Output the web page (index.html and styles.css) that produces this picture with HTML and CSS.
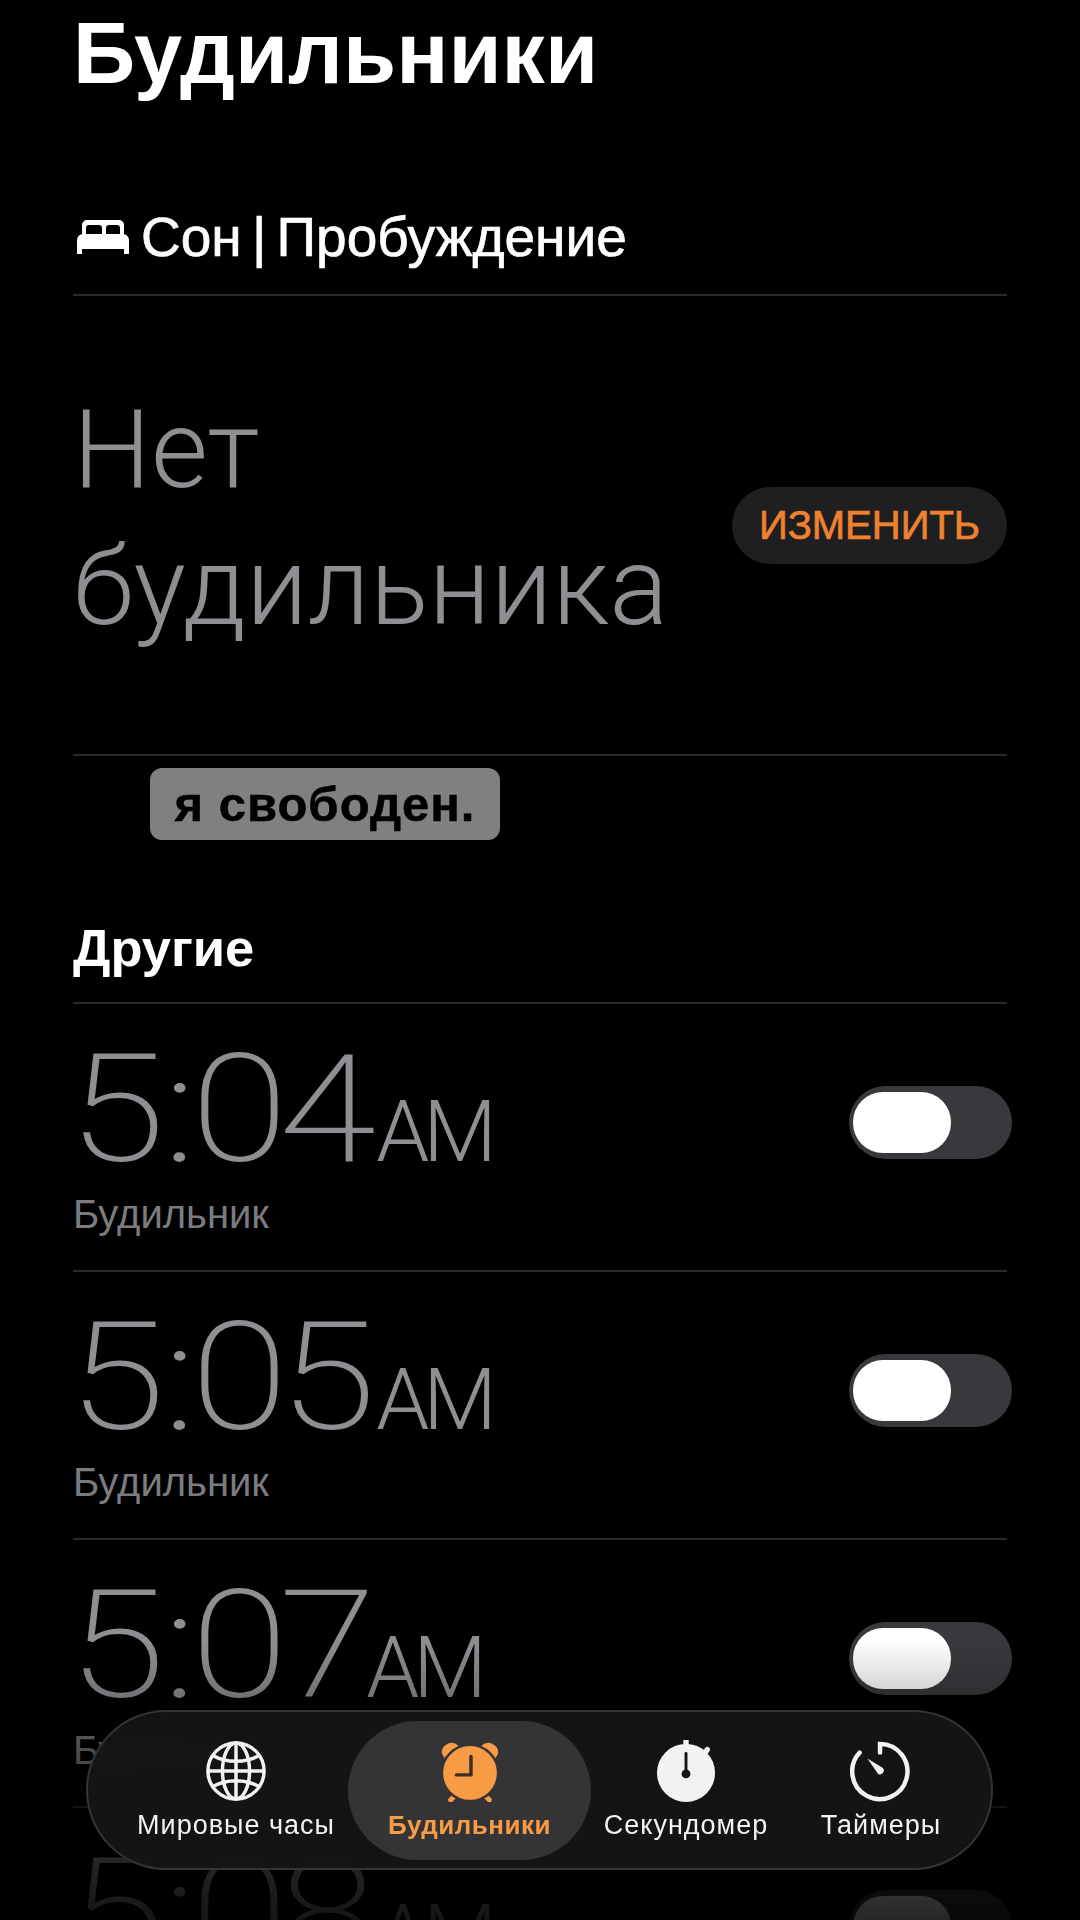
FILE: index.html
```html
<!DOCTYPE html>
<html lang="ru">
<head>
  <meta charset="utf-8">
  <title>Будильники</title>
  <link rel="stylesheet" href="styles.css">
</head>
<body>
<div class="screen">
  <h1 class="title">Будильники</h1>

  <div class="sleep-head">
    <svg class="bed" viewBox="0 0 52 34"><path fill-rule="evenodd" d="M10 0h32a5 5 0 0 1 5 5v9H5V5a5 5 0 0 1 5-5z M12 5a3 3 0 0 0-3 3v6h16V8a3 3 0 0 0-3-3z M32 5a3 3 0 0 0-3 3v6h14V8a3 3 0 0 0-3-3z" fill="#fff"/><path d="M6 14h40a6 6 0 0 1 6 6v14h-5v-5H5v5H0V20a6 6 0 0 1 6-6z" fill="#fff"/></svg>
    <span>Сон | Пробуждение</span>
  </div>

  <div class="no-alarm">
    <div class="no-alarm-text">Нет<br>будильника</div>
    <div class="edit-btn">ИЗМЕНИТЬ</div>
  </div>

  <div class="caption">я свободен.</div>

  <div class="others">Другие</div>

  <div class="alarm">
    <div>
      <div class="time"><span class="digits">5<span class="colon">:</span>04</span><span class="ampm">AM</span></div>
      <div class="label">Будильник</div>
    </div>
    <div class="toggle"><div class="knob"></div></div>
  </div>
  <div class="alarm">
    <div>
      <div class="time"><span class="digits">5<span class="colon">:</span>05</span><span class="ampm">AM</span></div>
      <div class="label">Будильник</div>
    </div>
    <div class="toggle"><div class="knob"></div></div>
  </div>
  <div class="alarm">
    <div>
      <div class="time"><span class="digits">5<span class="colon">:</span>07</span><span class="ampm ampm-tight">AM</span></div>
      <div class="label">Будильник</div>
    </div>
    <div class="toggle"><div class="knob"></div></div>
  </div>
  <div class="alarm">
    <div>
      <div class="time"><span class="digits">5<span class="colon">:</span>08</span><span class="ampm">AM</span></div>
      <div class="label">Будильник</div>
    </div>
    <div class="toggle"><div class="knob"></div></div>
  </div>

  <div class="fade"></div>

  <div class="tabbar">
    <div class="tab">
      <svg class="tab-icon" viewBox="0 0 64 64" fill="none" stroke="#f2f2f2" stroke-width="3.6">
        <circle cx="32" cy="32" r="29"/>
        <ellipse cx="32" cy="32" rx="14" ry="29"/>
        <path d="M32 3v58M3 32h58M8 16c7 4 15 6 24 6s17-2 24-6M8 48c7-4 15-6 24-6s17 2 24 6"/>
      </svg>
      <span>Мировые часы</span>
    </div>
    <div class="tab tab-active">
      <svg class="tab-icon" viewBox="0 0 64 64">
        <path d="M3 14a10 10 0 0 1 17-8l2 3L7 21z M61 14a10 10 0 0 0-17-8l-2 3 15 12z" fill="#f79c45"/>
        <path d="M12 62l4-4M52 62l-4-4" stroke="#f79c45" stroke-width="5" stroke-linecap="round"/>
        <circle cx="32" cy="34" r="29" fill="#f79c45" stroke="#343436" stroke-width="2.500"/>
        <path d="M33 17v19H18" fill="none" stroke="#3a3022" stroke-width="3.6" stroke-linecap="round" stroke-linejoin="round"/>
      </svg>
      <span>Будильники</span>
    </div>
    <div class="tab">
      <svg class="tab-icon" viewBox="0 0 64 64">
        <circle cx="32" cy="34" r="30" fill="#f2f2f4"/>
        <path d="M32 0v6M54 10l-3 4" stroke="#f2f2f4" stroke-width="5.5" stroke-linecap="round"/>
        <path d="M32 14v20" stroke="#151515" stroke-width="3" stroke-linecap="round"/>
        <circle cx="32" cy="35" r="4.6" fill="#151515"/>
      </svg>
      <span>Секундомер</span>
    </div>
    <div class="tab">
      <svg class="tab-icon" viewBox="0 0 64 64" fill="none">
        <path d="M31 13V4a28.500 28.500 0 1 1-21 9" stroke="#f2f2f2" stroke-width="4.6" stroke-linecap="round"/>
        <path d="M18 19l16 10a4 4 0 0 1-5 6z" fill="#f2f2f2"/>
      </svg>
      <span>Таймеры</span>
    </div>
  </div>
</div>
</body>
</html>
```
FILE: styles.css
```css
* {
  box-sizing: border-box;
}

body {
  margin: 0;
  background-color: #000;
  color: #fff;
  font-family: "Liberation Sans", Arial, sans-serif;
}

.screen {
  position: relative;
  width: 1080px;
  height: 1920px;
  padding: 0 73px;
  overflow: hidden;
}

.title {
  margin: 0;
  padding-top: 3px;
  font-size: 86.500px;
  line-height: 100px;
  font-weight: 700;
}

.sleep-head {
  display: flex;
  align-items: center;
  gap: 12px;
  height: 193px;
  padding-top: 76px;
  padding-left: 4px;
  border-bottom: 2px solid #2a2a2c;
  font-size: 55px;
  word-spacing: -5px;
  -webkit-text-stroke: 0.7px #fff;
}

.bed {
  width: 52px;
  height: 34px;
}

.no-alarm {
  display: flex;
  align-items: center;
  justify-content: space-between;
  height: 460px;
  border-bottom: 2px solid #2a2a2c;
}

.no-alarm-text {
  margin-bottom: 14px;
  font-family: "Roboto", sans-serif;
  font-size: 110px;
  line-height: 137px;
  font-weight: 300;
  color: #8e8e93;
}

.edit-btn {
  width: 275px;
  height: 77px;
  border-radius: 39px;
  background-color: #1f1f21;
  color: #f0812f;
  font-size: 40px;
  line-height: 77px;
  text-align: center;
  -webkit-text-stroke: 0.7px #f0812f;
}

.caption {
  width: 350px;
  height: 72px;
  margin: 12px 0 0 77px;
  border-radius: 12px;
  background-color: #808080;
  color: #000;
  font-size: 49px;
  line-height: 72px;
  font-weight: 700;
  text-align: center;
  letter-spacing: 1px;
  -webkit-text-stroke: 0.5px #000;
}

.others {
  height: 164px;
  padding-top: 78px;
  border-bottom: 2px solid #2a2a2c;
  font-size: 52.500px;
  line-height: 60px;
  font-weight: 700;
}

.alarm {
  display: flex;
  align-items: flex-start;
  justify-content: space-between;
  height: 268px;
  border-bottom: 2px solid #2a2a2c;
  padding-top: 21px;
}

.time {
  margin-left: -5px;
  font-family: "Roboto", sans-serif;
  font-size: 150px;
  line-height: 170px;
  font-weight: 200;
  color: #8e8e93;
}

/* the digits on the phone are wider than any installed thin face */
.digits {
  display: inline-block;
  margin-right: 55px;
  letter-spacing: -8px;
  transform: scaleX(1.18);
  transform-origin: left center;
}

.colon {
  margin: 0 3px 0 6px;
}

.ampm {
  font-size: 85px;
  line-height: 1;
  font-weight: 300;
  letter-spacing: -6px;
}

.ampm-tight {
  margin-left: -10px;
}

.label {
  margin-top: -3px;
  font-size: 40px;
  line-height: 44px;
  color: #7c7c80;
}

.toggle {
  width: 163px;
  height: 73px;
  margin-top: 61px;
  margin-right: -5px;
  padding: 6px 4px;
  border-radius: 37px;
  background-color: #39393d;
}

.knob {
  width: 98px;
  height: 61px;
  border-radius: 30px;
  background-color: #fff;
}

.fade {
  position: absolute;
  left: 0;
  right: 0;
  top: 1640px;
  bottom: 0;
  background: linear-gradient(rgba(0, 0, 0, 0), rgba(0, 0, 0, 0.75) 80%, rgba(0, 0, 0, 0.85));
}

.tabbar {
  position: absolute;
  left: 86px;
  top: 1710px;
  display: grid;
  grid-template-columns: 224px 243px 190px 1fr;
  align-items: center;
  width: 907px;
  height: 160px;
  padding: 0 10px 0 36px;
  border: 2px solid #343436;
  border-radius: 80px;
  background-color: rgba(22, 22, 23, 0.93);
  backdrop-filter: blur(14px);
}

.tab {
  display: flex;
  flex-direction: column;
  align-items: center;
  justify-content: center;
  height: 139px;
  gap: 8px;
  font-size: 27px;
  letter-spacing: 1px;
  color: #f2f2f2;
}

.tab-active {
  border-radius: 70px;
  background-color: #343436;
  color: #f79c45;
  font-size: 26px;
  letter-spacing: 0.5px;
  font-weight: 700;
}

.tab-icon {
  width: 62px;
  height: 62px;
}
```
